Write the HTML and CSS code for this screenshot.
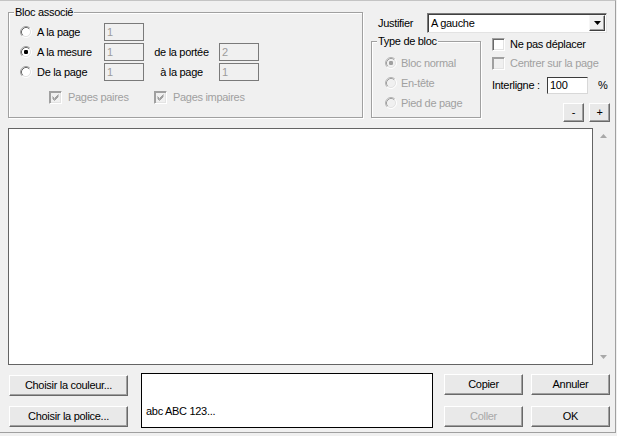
FILE: index.html
```html
<!DOCTYPE html>
<html lang="fr">
<head>
<meta charset="utf-8">
<title>Bloc</title>
<link rel="stylesheet" href="styles.css">
</head>
<body>
<svg class="defs" width="0" height="0" aria-hidden="true">
  <defs>
    <symbol id="radio" viewBox="0 0 12 12">
      <path d="M2.11 9.89A5.5 5.5 0 0 1 9.89 2.11" fill="none" stroke="#a0a0a0"/>
      <path d="M9.89 2.11A5.5 5.5 0 0 1 2.11 9.89" fill="none" stroke="#ffffff"/>
      <circle cx="6" cy="6" r="4.2" fill="#ffffff"/>
      <path d="M2.82 9.18A4.5 4.5 0 0 1 9.18 2.82" fill="none" stroke="#696969"/>
      <path d="M9.18 2.82A4.5 4.5 0 0 1 2.82 9.18" fill="none" stroke="#e3e3e3"/>
    </symbol>
    <symbol id="radio-dis" viewBox="0 0 12 12">
      <path d="M2.11 9.89A5.5 5.5 0 0 1 9.89 2.11" fill="none" stroke="#b4b4b4"/>
      <path d="M9.89 2.11A5.5 5.5 0 0 1 2.11 9.89" fill="none" stroke="#ffffff"/>
      <circle cx="6" cy="6" r="4.2" fill="#f0f0f0"/>
      <path d="M2.82 9.18A4.5 4.5 0 0 1 9.18 2.82" fill="none" stroke="#a0a0a0"/>
      <path d="M9.18 2.82A4.5 4.5 0 0 1 2.82 9.18" fill="none" stroke="#e3e3e3"/>
    </symbol>
  </defs>
</svg>

<div class="window">
  <div class="top">
    <div class="group assoc">
      <span class="legend">Bloc associé</span>
      <div class="assoc-grid">
        <label class="opt"><svg class="radio" viewBox="0 0 12 12"><use href="#radio"/></svg>A la page</label>
        <span class="field">1</span>
        <span></span>
        <span></span>

        <label class="opt"><svg class="radio" viewBox="0 0 12 12"><use href="#radio"/><rect x="4" y="4" width="4" height="4" rx="1.2" fill="#000"/></svg>A la mesure</label>
        <span class="field">1</span>
        <span class="mid">de la portée</span>
        <span class="field">2</span>

        <label class="opt"><svg class="radio" viewBox="0 0 12 12"><use href="#radio"/></svg>De la page</label>
        <span class="field">1</span>
        <span class="mid">à la page</span>
        <span class="field">1</span>
      </div>
      <div class="pages">
        <label class="cbl dis first"><span class="cb dis"><svg class="check" viewBox="0 0 7 7"><path d="M0.5 2.5 L2.5 4.5 L6.5 0.5 M0.5 3.5 L2.5 5.5 L6.5 1.5 M0.5 4.5 L2.5 6.5 L6.5 2.5" fill="none" stroke="#a0a0a0" stroke-width="1"/></svg></span>Pages paires</label>
        <label class="cbl dis"><span class="cb dis"><svg class="check" viewBox="0 0 7 7"><path d="M0.5 2.5 L2.5 4.5 L6.5 0.5 M0.5 3.5 L2.5 5.5 L6.5 1.5 M0.5 4.5 L2.5 6.5 L6.5 2.5" fill="none" stroke="#a0a0a0" stroke-width="1"/></svg></span>Pages impaires</label>
      </div>
    </div>

    <div class="right">
      <div class="justify">
        <span class="jlbl">Justifier</span>
        <div class="select">
          <span class="select-val">A gauche</span>
          <span class="drop"><svg width="7" height="4" viewBox="0 0 7 4"><path d="M0 0H7L3.5 4Z" fill="#000"/></svg></span>
        </div>
      </div>
      <div class="rb">
        <div class="group type">
          <span class="legend">Type de bloc</span>
          <label class="opt dis"><svg class="radio" viewBox="0 0 12 12"><use href="#radio-dis"/><rect x="4" y="4" width="4" height="4" rx="1.2" fill="#a0a0a0"/></svg>Bloc normal</label>
          <label class="opt dis"><svg class="radio" viewBox="0 0 12 12"><use href="#radio-dis"/></svg>En-tête</label>
          <label class="opt dis"><svg class="radio" viewBox="0 0 12 12"><use href="#radio-dis"/></svg>Pied de page</label>
        </div>
        <div class="options">
          <label class="orow o1"><span class="cb"></span>Ne pas déplacer</label>
          <label class="orow o2 dis"><span class="cb dis"></span>Centrer sur la page</label>
          <div class="orow o3">
            <span class="ilbl">Interligne :</span>
            <span class="field on">100</span>
            <span class="pct">%</span>
          </div>
          <div class="orow o4">
            <button class="btn small">-</button>
            <button class="btn small">+</button>
          </div>
        </div>
      </div>
    </div>
  </div>

  <div class="editor">
    <div class="etext"></div>
    <div class="scroll">
      <svg width="7" height="4" viewBox="0 0 7 4"><path d="M0 4H7L3.5 0Z" fill="#a8a8a8"/></svg>
      <svg width="7" height="4" viewBox="0 0 7 4"><path d="M0 0H7L3.5 4Z" fill="#a8a8a8"/></svg>
    </div>
  </div>

  <div class="bottom">
    <div class="lcol">
      <button class="btn wide">Choisir la couleur...</button>
      <button class="btn wide">Choisir la police...</button>
    </div>
    <div class="preview">abc ABC 123...</div>
    <div class="rgrid">
      <button class="btn">Copier</button>
      <button class="btn">Annuler</button>
      <button class="btn dis">Coller</button>
      <button class="btn">OK</button>
    </div>
  </div>
</div>
</body>
</html>
```
FILE: styles.css
```css
* { box-sizing: border-box; }

body {
  margin: 0;
  background: #f0f0f0;
  font: 11px/13px "Liberation Sans", Arial, sans-serif;
  letter-spacing: -0.3px;
  color: #000;
}

.defs { position: absolute; width: 0; height: 0; overflow: hidden; }

.window {
  width: 616px;
  height: 433px;
  border-top: 1px solid #c4c4c4;
  border-right: 1px solid #a0a0a0;
  border-bottom: 1px solid #a0a0a0;
  padding-left: 8px;
}

.top { display: flex; height: 117px; }

.group {
  position: relative;
  border: 1px solid #a0a0a0;
  box-shadow: inset 1px 1px 0 #fff, 1px 1px 0 #fff;
}

.legend {
  position: absolute;
  top: -7px;
  left: 5px;
  padding: 0 1px;
  background: #f0f0f0;
  white-space: nowrap;
}

.assoc {
  margin-top: 11px;
  width: 355px;
  height: 106px;
  padding: 10px 0 0 11px;
}

.assoc-grid {
  display: grid;
  grid-template-columns: 84px 40px 75px 40px;
  grid-auto-rows: 18px;
  row-gap: 2px;
  align-items: center;
}

.opt { display: flex; align-items: center; gap: 5px; white-space: nowrap; }
.opt.dis { color: #a0a0a0; }

.radio { width: 12px; height: 12px; flex: none; }

.field {
  height: 18px;
  border: 1px solid #7a7a7a;
  background: #f0f0f0;
  color: #9c9c9c;
  padding: 2px 0 0 2px;
  line-height: 13px;
}

.field.on {
  width: 41px;
  height: 17px;
  background: #fff;
  color: #000;
  border-color: #3c3c3c #d8d8d8 #d8d8d8 #3c3c3c;
  padding-top: 1px;
}

.mid { text-align: center; }

.pages { display: flex; margin-top: 10px; padding-left: 29px; }

.cbl { display: flex; align-items: center; gap: 6px; white-space: nowrap; }
.cbl.dis { color: #a0a0a0; }
.cbl.first { width: 105px; }

.cb {
  width: 13px;
  height: 13px;
  flex: none;
  display: flex;
  align-items: center;
  justify-content: center;
  background: #fff;
  border: 1px solid;
  border-color: #a0a0a0 #fff #fff #a0a0a0;
  box-shadow: inset 1px 1px 0 #696969, inset -1px -1px 0 #e3e3e3;
}
.cb.dis { background: #f0f0f0; box-shadow: inset 1px 1px 0 #a0a0a0, inset -1px -1px 0 #e3e3e3; }

.check { width: 7px; height: 7px; }

.right { margin-left: 8px; flex: 1; }

.justify {
  display: flex;
  align-items: center;
  height: 20px;
  margin-top: 12px;
  padding-left: 7px;
}
.jlbl { width: 49px; }

.select {
  width: 180px;
  height: 20px;
  display: flex;
  padding: 1px;
  background: #fff;
  border: 1px solid;
  border-color: #7a7a7a #e3e3e3 #e3e3e3 #7a7a7a;
  box-shadow: inset 1px 1px 0 #404040;
}
.select-val { flex: 1; padding-left: 2px; line-height: 16px; }

.drop {
  width: 16px;
  height: 16px;
  display: flex;
  align-items: center;
  justify-content: center;
  background: #f0f0f0;
  border: 1px solid;
  border-color: #f6f6f6 #404040 #404040 #f6f6f6;
  box-shadow: inset -1px -1px 0 #a0a0a0;
}

.rb { display: flex; margin-top: 4px; }

.type {
  margin-top: 4px;
  width: 110px;
  height: 77px;
  padding: 11px 0 0 13px;
}
.type .opt { height: 20px; gap: 4px; }

.options { margin-left: 11px; flex: 1; }

.orow { display: flex; align-items: center; white-space: nowrap; }
.orow .cb { margin-right: 5px; }
.orow.dis { color: #a0a0a0; }
.o1 { height: 14px; }
.o2 { height: 14px; margin-top: 5px; }
.o3 { height: 17px; margin-top: 7px; }
.ilbl { width: 55px; }
.pct { margin-left: 10px; }
.o4 { margin-top: 9px; justify-content: flex-end; gap: 5px; padding-right: 5px; }

.btn {
  font: inherit;
  letter-spacing: inherit;
  color: #000;
  background: #e9e9e9;
  border: 1px solid;
  border-color: #fff #696969 #696969 #fff;
  box-shadow: inset -1px -1px 0 #a0a0a0;
  padding: 0;
  height: 21px;
}
.btn.dis { color: #a8a8a8; }
.btn.small { width: 21px; height: 19px; }

.editor {
  display: flex;
  margin-top: 10px;
  height: 237px;
  width: 607px;
}
.etext {
  width: 585px;
  background: #fff;
  border: 1px solid #646464;
}
.scroll {
  flex: 1;
  display: flex;
  flex-direction: column;
  justify-content: space-between;
  align-items: flex-start;
  padding: 6px 0 6px 7px;
}

.bottom { display: flex; margin-top: 8px; }

.lcol {
  display: flex;
  flex-direction: column;
  gap: 10px;
  padding-top: 2px;
  margin-left: 1px;
}
.btn.wide { width: 119px; }

.preview {
  margin-left: 13px;
  width: 292px;
  height: 55px;
  background: #fff;
  border: 1px solid #000;
  padding: 31px 0 0 4px;
}

.rgrid {
  margin-left: 11px;
  padding-top: 1px;
  display: grid;
  grid-template-columns: 79px 79px;
  grid-auto-rows: 21px;
  column-gap: 8px;
  row-gap: 11px;
}
```
